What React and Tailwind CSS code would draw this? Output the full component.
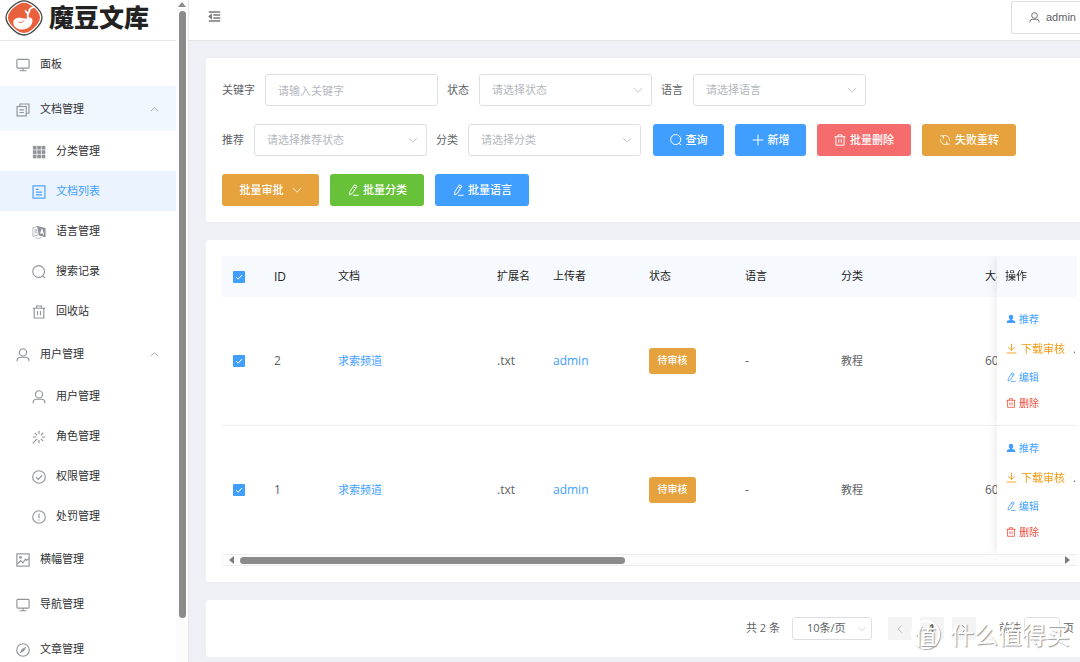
import React from 'react'
import clsx from 'clsx'

const paths = {
  monitor: <><rect x="1" y="1.5" width="14" height="10" rx="1.2" /><path d="M8 11.5v3M4 14.6h8" /></>,
  copy: <><path d="M4.5 3.8V1.2h10.3v10.5h-2.9" /><rect x="1.2" y="4" width="10.5" height="10.8" /><path d="M4 7.8h5M4 10.8h5" /></>,
  grid: (
    <g fill="currentColor" stroke="none">
      {[1, 6, 11].map((y) => [1, 6, 11].map((x) => <rect key={`${x}-${y}`} x={x} y={y} width="4.2" height="4.2" />))}
    </g>
  ),
  document: <><rect x="1.2" y="1" width="13.6" height="14" /><path d="M4.5 5h3M4.5 8.2h7M4.5 11.3h7" /></>,
  language: (
    <>
      <path d="M1 3l6-1.5v10L1 13zM2.5 6l3-.6M4 4.5v1M5.3 5.6c-.5 2-1.5 3.4-2.8 4.3M3 7.3l2.7 2M4 14.5c2 1 4.5 1 6.500 0" strokeWidth="0.7" />
      <path d="M6 1l9.500 2.500V14L8 12z" fill="currentColor" stroke="none" />
      <path d="M9.800 10l1.600-4.500 1.800 5.500M10.300 8.500l2.200.6" stroke="#fff" />
    </>
  ),
  search: <><circle cx="7.6" cy="7.4" r="6.7" /><path d="M12 12.300l3 2.700" /></>,
  trash: <path d="M.8 3.700h14.400M5.300 3.500V1.200h5.400v2.300M2.500 3.700v11.200h11V3.700M6.300 6.800v5M9.700 6.800v5" />,
  user: <><circle cx="8" cy="5" r="4.1" /><path d="M1.300 15.200V14a3.700 3.700 0 0 1 3.700-3.400h6a3.700 3.700 0 0 1 3.700 3.400v1.200" /></>,
  loading: <path d="M8 .8v3.700M8 11.500v3.700M.8 8h3.700M11.500 8h3.700M3.200 3.200l2.600 2.600M10.200 10.200l2.600 2.600M12.800 3.200l-2.600 2.600M5.800 10.200L.8 15.200" />,
  check: <><circle cx="8" cy="8" r="7.2" /><path d="M4.600 8.200l2.500 2.500 4.600-4.700" /></>,
  warning: <><circle cx="8" cy="8" r="7.2" /><path d="M8 4v5.300M8 10.800v1.300" /></>,
  picture: <><rect x="1" y="1" width="14" height="14" /><circle cx="5.200" cy="5" r="1" /><path d="M1.500 12.700l3.800-4 2.500 2.500 3-4.200 1.500 1.500 2.300-2.300" /></>,
  compass: <><circle cx="8" cy="8" r="7.2" /><path d="M12 4L9.200 9.200 4 12l2.800-5.200z" fill="currentColor" stroke="none" /></>,
  up: <path d="M1.500 11L8 4.500l6.500 6.500" />,
  down: <path d="M1.500 5L8 11.500 14.500 5" />,
  left: <path d="M11 2L5 8l6 6" />,
  right: <path d="M5 2l6 6-6 6" />,
  plus: <path d="M8 .8v14.400M.8 8h14.400" />,
  edit: <path d="M10 1l3.200 2-6 9.500-4 2 .7-4.300zM8.500 3.500l3.200 2M8 15h7.500" />,
  refresh: <path d="M5.500 2.500a6.200 6.200 0 0 1 8.500 6.500M2 2.500h3.800v3.800M10.500 13.500A6.200 6.200 0 0 1 2 7M14 13.500h-3.800V9.700" />,
  fold: <path d="M1 2.500h14M6.500 6.200H15M6.500 9.800H15M1 13.500h14M4 5.800L1.500 8 4 10.200z" strokeWidth="1.7" />,
  person: <path d="M8 1a3.700 3.700 0 0 1 3.600 3.700c0 1.800-.7 3-1.700 3.900v1l4.100 1.300 1 3.300H1l1-3.300 4.100-1.300v-1C5 7.700 4.400 6.500 4.400 4.700A3.700 3.700 0 0 1 8 1z" fill="currentColor" stroke="none" />,
  download: <path d="M8 1v9.500M3.200 6L8 10.700 12.800 6M1 14.500h14" />,
}

const Icon = ({ name, size = 14, className }) => (
  <svg
    viewBox="0 0 16 16"
    width={size}
    height={size}
    fill="none"
    stroke="currentColor"
    strokeWidth="1.3"
    className={clsx('shrink-0', className)}
    aria-hidden="true"
  >
    {paths[name]}
  </svg>
)

const menu = [
  { label: '面板', icon: 'monitor' },
  {
    label: '文档管理',
    icon: 'copy',
    highlight: true,
    children: [
      { label: '分类管理', icon: 'grid' },
      { label: '文档列表', icon: 'document', active: true },
      { label: '语言管理', icon: 'language' },
      { label: '搜索记录', icon: 'search' },
      { label: '回收站', icon: 'trash' },
    ],
  },
  {
    label: '用户管理',
    icon: 'user',
    children: [
      { label: '用户管理', icon: 'user' },
      { label: '角色管理', icon: 'loading' },
      { label: '权限管理', icon: 'check' },
      { label: '处罚管理', icon: 'warning' },
    ],
  },
  { label: '横幅管理', icon: 'picture' },
  { label: '导航管理', icon: 'monitor' },
  { label: '文章管理', icon: 'compass' },
]

const Logo = () => (
  <a href="#" className="flex h-[41px] shrink-0 items-start gap-1.5 border-b border-[#e6e6e6] pl-[5px]">
    <svg viewBox="0 0 38 36" width="38" height="36" className="shrink-0" aria-hidden="true">
      <path d="M19 .8c4 0 7 1.800 10.500 4.700C34 9.200 37 13 37 17.500S34 26 29.500 30C26 33.200 23 35 19 35s-7-1.800-10.500-5C4 26 1 22 1 17.500S4 9.200 8.500 5.500C12 2.600 15 .8 19 .8z" fill="#fff" stroke="#444" strokeWidth="1.3" />
      <path d="M19 2.800c3.400 0 6.200 1.600 9.300 4.200 4.200 3.500 6.700 6.700 6.700 10.500s-2.500 7.200-6.700 11c-3 2.800-5.900 4.400-9.300 4.400s-6.300-1.600-9.300-4.400C5.500 24.700 3 21.300 3 17.500S5.500 10.500 9.700 7C12.800 4.400 15.600 2.800 19 2.800z" fill="#e8603c" />
      <path d="M9 20c1.800-2.300 5-2.600 7.500-2 2.500.6 4.500 1 6.500 0 2.500-1.200 4.600.2 4.500 2.800-.2 5-4.700 8.700-10 8.700-4.700 0-8-2.200-9-5.300-.5-1.600-.4-3.100.5-4.200z" fill="#fff" />
      <path d="M22.800 17.500c-.4-2.500.4-5 1.700-6.500M23.500 13.500c-1.700-.3-2.700-1.200-3.100-2.700M24 12c.2-2.500 1.800-4.300 4.700-4.800" stroke="#fff" strokeWidth="1.800" fill="none" strokeLinecap="round" />
      <path d="M13.500 22c2 1.200 4.500.5 5.500-1.700" stroke="#e8603c" strokeWidth="0.900" fill="none" />
    </svg>
    <span className="text-[25px] leading-[35px] font-black whitespace-nowrap text-[#222]">魔豆文库</span>
  </a>
)

const Sidebar = () => (
  <aside className="flex h-full w-[189px] shrink-0 border-r border-[#e6e6e6] bg-white">
    <div className="flex min-w-0 flex-1 flex-col">
      <Logo />
      <nav className="text-[11px] text-[#303133]">
        {menu.map((item) => (
          <div key={item.label}>
            <a href="#" className={clsx('flex h-[45px] items-center gap-[9px] pt-0.5 pr-[17px] pl-4', item.highlight && 'bg-[#f0f7ff]')}>
              <Icon name={item.icon} className="text-[#909399]" />
              <span className="flex-1 pl-px">{item.label}</span>
              {item.children && <Icon name="up" size={9} className="text-[#909399]" />}
            </a>
            {item.children?.map((child) => (
              <a
                key={child.label}
                href="#"
                className={clsx('flex h-10 items-center gap-[9px] pt-px pl-8', child.active && 'bg-[#ebf3ff] text-[#409eff]')}
              >
                <Icon name={child.icon} className={child.active ? 'text-[#409eff]' : 'text-[#909399]'} />
                <span className="pl-px">{child.label}</span>
              </a>
            ))}
          </div>
        ))}
      </nav>
    </div>
    <div className="flex w-3 flex-col items-center bg-[#fcfcfc] pt-0.5">
      <svg viewBox="0 0 8 5" width="8" height="5" aria-hidden="true"><path d="M4 0l4 5H0z" fill="#8b8b8b" /></svg>
      <div className="mt-1 h-[92%] w-[7px] rounded-full bg-[#8b8b8b]" />
    </div>
  </aside>
)

const SelectField = ({ id, label, placeholder }) => (
  <div className="flex items-center gap-2.5">
    <label htmlFor={id}>{label}</label>
    <div className="relative">
      <select id={id} className="h-8 w-[173px] appearance-none rounded-[3px] border border-[#dcdfe6] bg-white px-3 text-[#b4b8c0]">
        <option>{placeholder}</option>
      </select>
      <Icon name="down" size={10} className="pointer-events-none absolute top-[11px] right-[9px] text-[#b4b8c0]" />
    </div>
  </div>
)

const Button = ({ icon, children, className }) => (
  <button className={clsx('flex h-8 items-center justify-center gap-1 rounded-[3px] font-medium text-white', className)}>
    {icon && <Icon name={icon} size={12} />}
    {children}
  </button>
)

const Filters = () => (
  <section className="flex flex-col gap-[18px] rounded-l-[3px] bg-white p-4 text-[11px] text-[#606266]">
    <div className="flex items-center gap-[9px] whitespace-nowrap">
      <div className="flex items-center gap-2.5">
        <label htmlFor="keyword">关键字</label>
        <input
          id="keyword"
          placeholder="请输入关键字"
          className="h-8 w-[173px] rounded-[3px] border border-[#dcdfe6] px-3 placeholder:text-[#b4b8c0]"
        />
      </div>
      <SelectField id="status" label="状态" placeholder="请选择状态" />
      <SelectField id="language" label="语言" placeholder="请选择语言" />
    </div>
    <div className="flex items-center gap-[9px] whitespace-nowrap">
      <SelectField id="recommend" label="推荐" placeholder="请选择推荐状态" />
      <SelectField id="category" label="分类" placeholder="请选择分类" />
      <div className="ml-[3px] flex gap-[11px]">
        <Button icon="search" className="w-[71px] bg-[#409eff]">查询</Button>
        <Button icon="plus" className="w-[71px] bg-[#409eff]">新增</Button>
        <Button icon="trash" className="w-[94px] bg-[#f56c6c]">批量删除</Button>
        <Button icon="refresh" className="w-[94px] bg-[#e6a23c]">失败重转</Button>
      </div>
    </div>
    <div className="flex gap-[11px]">
      <Button className="w-[97px] bg-[#e6a23c]">
        批量审批
        <Icon name="down" size={10} className="ml-1" />
      </Button>
      <Button icon="edit" className="w-[94px] bg-[#67c23a]">批量分类</Button>
      <Button icon="edit" className="w-[94px] bg-[#409eff]">批量语言</Button>
    </div>
  </section>
)

const Checkbox = ({ label }) => (
  <span className="grid w-3 place-items-center">
    <input type="checkbox" defaultChecked aria-label={label} className="col-start-1 row-start-1 size-3 appearance-none rounded-[1px] bg-[#409eff]" />
    <svg viewBox="0 0 12 12" width="12" height="12" className="pointer-events-none col-start-1 row-start-1" aria-hidden="true">
      <path d="M3 6l2.200 2.200L9 4" fill="none" stroke="#fff" />
    </svg>
  </span>
)

const columns = ['ID', '文档', '扩展名', '上传者', '状态', '语言', '分类', '大小']

const rows = [
  { id: 2, title: '求索频道', ext: '.txt', user: 'admin', status: '待审核', lang: '-', category: '教程', size: '60 B' },
  { id: 1, title: '求索频道', ext: '.txt', user: 'admin', status: '待审核', lang: '-', category: '教程', size: '60 B' },
]

const RowActions = () => (
  <div className="flex flex-col text-[10px] leading-none text-[#409eff]">
    <button className="flex h-[26px] items-center gap-[3px]"><Icon name="person" size={10} />推荐</button>
    <div className="flex h-8 items-center text-[11px]">
      <button className="flex items-center gap-1 whitespace-nowrap text-[#f39c12]"><Icon name="download" size={11} />下载审核</button>
      <span className="ml-2 text-[#606266]">.</span>
    </div>
    <button className="flex h-[26px] items-center gap-[3px]"><Icon name="edit" size={10} />编辑</button>
    <button className="flex h-[26px] items-center gap-[3px] text-[#e74c3c]"><Icon name="trash" size={10} />删除</button>
  </div>
)

const DocumentTable = () => (
  <section className="rounded-l-[3px] bg-white py-4 pr-[3px] pl-4">
    <div className="overflow-hidden">
      <table className="w-[1830px] table-fixed border-separate border-spacing-0 text-left text-xs text-[#606266]">
        <colgroup>
          <col className="w-10" />
          <col className="w-16" />
          <col className="w-[159px]" />
          <col className="w-14" />
          <col className="w-24" />
          <col className="w-24" />
          <col className="w-24" />
          <col className="w-36" />
          <col />
          <col className="w-20" />
        </colgroup>
        <thead>
          <tr className="h-[41px] bg-[#f6faff] text-[#222]">
            <th className="pl-[11px]"><Checkbox label="全选" /></th>
            {columns.map((name) => (
              <th key={name} className={clsx('px-3 font-normal whitespace-nowrap', name !== 'ID' && 'text-[11px]')}>{name}</th>
            ))}
            <th className="sticky right-0 bg-[#f6faff] pl-2 text-[11px] font-normal shadow-[0_0_10px_rgba(0,0,0,0.12)]">操作</th>
          </tr>
        </thead>
        <tbody>
          {rows.map((row) => (
            <tr key={row.id} className="h-[129px] *:border-b *:border-[#ebeef5] last:h-32 last:*:border-b-0">
              <td className="pl-[11px]"><Checkbox label={`选择 ${row.id}`} /></td>
              <td className="px-3">{row.id}</td>
              <td className="px-3 text-[11px]"><a href="#" className="text-[#409eff]">{row.title}</a></td>
              <td className="px-3">{row.ext}</td>
              <td className="px-3"><a href="#" className="text-[#409eff]">{row.user}</a></td>
              <td className="px-3">
                <span className="inline-flex h-[26px] w-[47px] items-center justify-center rounded-[3px] bg-[#e6a23c] text-[10px] font-medium text-white">
                  {row.status}
                </span>
              </td>
              <td className="px-3">{row.lang}</td>
              <td className="px-3 text-[11px]">{row.category}</td>
              <td className="px-3">{row.size}</td>
              <td className="sticky right-0 bg-white pl-[9px] shadow-[0_0_10px_rgba(0,0,0,0.12)] [clip-path:inset(0_0_0_-12px)]">
                <RowActions />
              </td>
            </tr>
          ))}
        </tbody>
      </table>
    </div>
    <div className="flex h-3 items-center border-y border-[#eeeeee] bg-[#fcfcfc] px-[7px]">
      <svg viewBox="0 0 5 8" width="5" height="8" aria-hidden="true"><path d="M5 0v8L0 4z" fill="#7d7d7d" /></svg>
      <div className="mx-1.5 flex-1">
        <div className="h-[7px] w-[47%] rounded-full bg-[#8b8b8b]" />
      </div>
      <svg viewBox="0 0 5 8" width="5" height="8" aria-hidden="true"><path d="M0 0v8l5-4z" fill="#7d7d7d" /></svg>
    </div>
  </section>
)

const Pagination = () => (
  <section className="relative flex h-[57px] shrink-0 items-center justify-end rounded-l-[3px] bg-white pr-1.5 text-[11px] whitespace-nowrap text-[#606266]">
    <span>共 2 条</span>
    <div className="relative ml-3">
      <select aria-label="每页条数" className="h-[23px] w-20 appearance-none rounded-[3px] border border-[#dcdfe6] bg-white pl-3.5">
        <option>10条/页</option>
      </select>
      <Icon name="down" size={8} className="pointer-events-none absolute top-2 right-1.5 text-[#b4b8c0]" />
    </div>
    <div className="ml-4 flex gap-2 *:flex *:h-[23px] *:w-6 *:items-center *:justify-center *:rounded-[2px] *:bg-[#f4f4f5]">
      <button aria-label="上一页" className="text-[#b4b8c0]"><Icon name="left" size={10} /></button>
      <button className="font-bold">1</button>
      <button aria-label="下一页"><Icon name="right" size={10} /></button>
    </div>
    <label htmlFor="page" className="ml-[23px]">前往</label>
    <input id="page" className="mx-[3px] h-[23px] w-9 rounded-[3px] border border-[#dcdfe6] text-center" />
    <span>页</span>
    <div className="pointer-events-none absolute top-5 right-2.5 flex items-center gap-2.5 text-white [text-shadow:1px_1px_1px_#999]">
      <span className="flex size-[29px] items-center justify-center rounded-full border-2 border-white text-[22px] leading-none shadow-[1px_1px_1px_#aaa]">值</span>
      <span className="text-[24px] leading-none">什么值得买</span>
    </div>
  </section>
)

const App = () => (
  <div className="flex h-screen overflow-hidden bg-[#eff0f5] font-['Open_Sans','Noto_Sans_CJK_SC',sans-serif]">
    <Sidebar />
    <div className="flex min-w-0 flex-1 flex-col">
      <header className="flex h-[41px] shrink-0 items-start justify-between border-b border-[#e6e6e6] bg-white">
        <button aria-label="收起菜单" className="mt-2.5 ml-[19px] text-[#7a7a7a]"><Icon name="fold" size={13} /></button>
        <button className="mt-px flex h-[33px] w-[69px] items-center gap-1.5 rounded-l-[3px] border border-r-0 border-[#dcdfe6] pl-[17px] font-['Liberation_Sans',sans-serif] text-[11px] text-[#606266]">
          <Icon name="user" size={11} />
          admin
        </button>
      </header>
      <main className="flex flex-col gap-[18px] overflow-hidden pt-[17px] pl-[17px]">
        <Filters />
        <DocumentTable />
        <Pagination />
      </main>
    </div>
  </div>
)

export default App
